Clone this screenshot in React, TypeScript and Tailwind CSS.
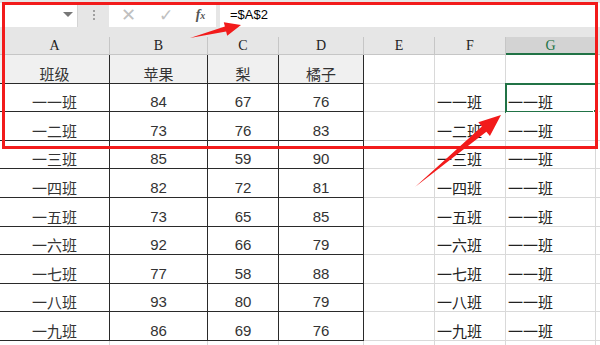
import React from "react";

const cjk = { fontFamily: '"Noto Sans CJK SC", "Noto Sans", sans-serif' };
const num = { fontFamily: '"Liberation Sans", Arial, sans-serif' };
const serif = { fontFamily: '"Liberation Serif", "Times New Roman", serif' };

const classes = ["一一班", "一二班", "一三班", "一四班", "一五班", "一六班", "一七班", "一八班", "一九班"];
const apples = [84, 73, 85, 82, 73, 92, 77, 93, 86];
const pears = [67, 76, 59, 72, 65, 66, 58, 80, 69];
const oranges = [76, 83, 90, 81, 85, 79, 88, 79, 76];

const cols = ["A", "B", "C", "D", "E", "F", "G"];

export default function App() {
  const rows = [
    { a: "班级", b: "苹果", c: "梨", d: "橘子", f: "", g: "", head: true },
    ...classes.map((c, i) => ({
      a: c,
      b: String(apples[i]),
      c: String(pears[i]),
      d: String(oranges[i]),
      f: c,
      g: "一一班",
      head: false,
    })),
  ];

  return (
    <div className="relative w-[600px] h-[345px] overflow-hidden bg-[#e6e6e6]">
      {/* formula bar */}
      <div className="h-[37px] bg-[#e6e6e6] flex items-start pt-[3px]">
        <div className="w-[78px] h-[24px] bg-white border-r border-[#d4d4d4] relative">
          <div className="absolute left-[63px] top-[9px] w-0 h-0 border-l-[5px] border-r-[5px] border-t-[5px] border-l-transparent border-r-transparent border-t-[#777]" />
        </div>
        <div className="w-[31px] h-[24px] flex flex-col items-center justify-center gap-[2px]">
          <div className="w-[2px] h-[2px] bg-[#a0a0a0]" />
          <div className="w-[2px] h-[2px] bg-[#a0a0a0]" />
          <div className="w-[2px] h-[2px] bg-[#a0a0a0]" />
        </div>
        <div className="w-[107px] h-[24px] bg-white flex items-center text-[#c0c0c0]">
          <span className="w-[38px] text-center text-[18px] leading-none font-light" style={num}>✕</span>
          <span className="w-[38px] text-center text-[17px] leading-none" style={num}>✓</span>
          <span className="w-[31px] text-center text-[14px] leading-none italic text-[#555] font-bold" style={serif}>
            f<span className="text-[10px]">x</span>
          </span>
        </div>
        <div className="ml-[4px] flex-1 h-[24px] bg-white flex items-center pl-[10px] text-[13px] text-black" style={num}>
          =$A$2
        </div>
      </div>

      {/* grid */}
      <div className="grid grid-cols-[110px_98px_71px_85px_71px_71px_90px_4px] bg-white">
        {cols.map((c) => (
          <div
            key={c}
            className={`h-[18px] flex items-center justify-center text-[14px] border-r border-[#c6c6c6] ${
              c === "G" ? "bg-[#d3d3d3] text-[#217346] border-b-2 border-b-[#217346]" : "bg-[#e6e6e6] text-[#222] border-b border-b-[#c6c6c6]"
            }`}
            style={serif}
          >
            {c}
          </div>
        ))}
        <div className="h-[18px] bg-[#e6e6e6] border-b border-[#c6c6c6]" />

        {rows.map((r, i) => {
          const dark = `h-[28.6px] flex items-end justify-center pb-[2px] leading-[15px] border-r border-b border-[#2a2a2a] text-[15px] text-[#333] ${
            r.head ? "bg-[#f0f0f0]" : "bg-white"
          }`;
          const light = "h-[28.6px] flex items-end pb-[2px] leading-[15px] border-r border-b border-[#d9d9d9] text-[15px] text-[#222] bg-white";
          return (
            <React.Fragment key={i}>
              <div className={dark} style={cjk}>{r.a}</div>
              <div className={dark} style={r.head ? cjk : num}>{r.b}</div>
              <div className={dark} style={r.head ? cjk : num}>{r.c}</div>
              <div className={dark} style={r.head ? cjk : num}>{r.d}</div>
              <div className={light} />
              <div className={`${light} pl-[2px]`} style={cjk}>{r.f}</div>
              <div className={`${light} pl-[2px] relative`} style={cjk}>
                {r.g}
                {i === 1 && (
                  <>
                    <div className="absolute -left-[1px] -top-[1px] w-[92px] h-[30px] border-2 border-[#217346]" />
                    <div className="absolute right-[-4px] bottom-[-4px] w-[6px] h-[6px] bg-[#217346] border border-white" />
                  </>
                )}
              </div>
              <div className="h-[28.6px] border-b border-[#d9d9d9] bg-white" />
            </React.Fragment>
          );
        })}
        {cols.map((c) => (
          <div key={`e-${c}`} className="h-[20px] border-r border-[#d9d9d9] bg-white" />
        ))}
        <div className="h-[20px] bg-white" />
      </div>

      {/* annotations */}
      <div className="absolute left-[2px] top-[2px] w-[596px] h-[147px] border-[3px] border-[#f21b1b] pointer-events-none" />
      <svg className="absolute left-0 top-0 pointer-events-none" width="600" height="345" viewBox="0 0 600 345">
        <polygon points="190,38 226.1,31.4 227.2,35.7 241,25 223.8,22.2 224.9,26.5" fill="#f21b1b" />
        <polygon points="415,187 486.35,131.8 489.9,136 501,115 478.3,122.2 481.85,126.4" fill="#f21b1b" />
      </svg>
    </div>
  );
}
